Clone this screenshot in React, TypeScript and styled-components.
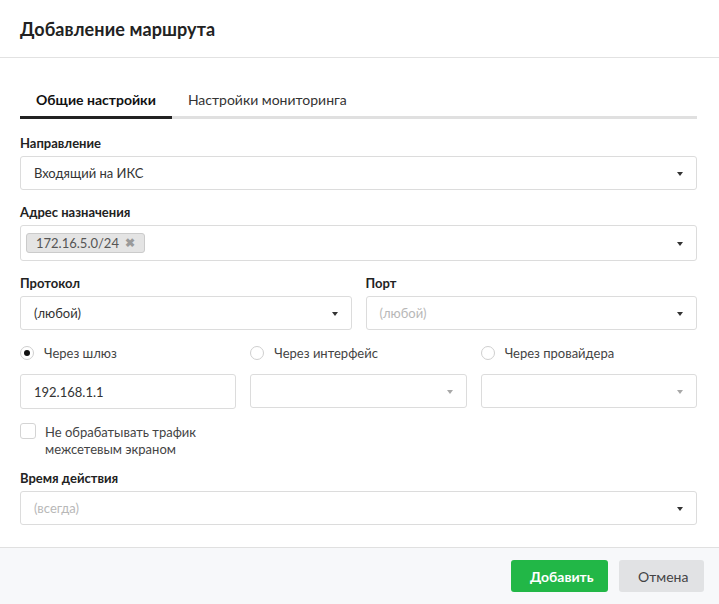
import React from "react"
import styled, { createGlobalStyle, css } from "styled-components"

const GlobalStyle = createGlobalStyle`
  html, body {
    margin: 0;
    padding: 0;
    background: #fff;
  }
  body {
    font-family: Lato, "Open Sans", "Liberation Sans", sans-serif;
    color: #333;
    -webkit-font-smoothing: antialiased;
  }
`

const Dialog = styled.div`
  width: 719px;
  height: 604px;
  display: flex;
  flex-direction: column;
  background: #fff;
`

const Header = styled.div`
  height: 58px;
  display: flex;
  align-items: center;
  padding: 0 20px;
  border-bottom: 1px solid #e2e2e2;
  box-sizing: border-box;
  flex-shrink: 0;
`

const Title = styled.h2`
  margin: 0;
  font-size: 18px;
  font-weight: 700;
  color: #222;
  letter-spacing: 0.1px;
`

const Body = styled.div`
  flex: 1;
  padding: 28px 22px 0 20px;
`

const Tabs = styled.div`
  display: flex;
  border-bottom: 3px solid #e0e0e0;
  margin-bottom: 17px;
`

const Tab = styled.div<{ $active?: boolean }>`
  padding: 5px 16px 7px;
  font-size: 14px;
  line-height: 18px;
  margin-bottom: -3px;
  border-bottom: 3px solid transparent;
  color: #333;
  cursor: pointer;
  ${(p) =>
    p.$active &&
    css`
      font-weight: 700;
      color: #111;
      border-bottom-color: #222;
    `}
`

const Field = styled.div<{ $gap?: number }>`
  margin-bottom: ${(p) => p.$gap ?? 15}px;
`

const Label = styled.div`
  font-size: 13px;
  font-weight: 700;
  line-height: 15px;
  color: #222;
  margin-bottom: 5px;
`

const Box = styled.div<{ $tall?: boolean }>`
  height: ${(p) => (p.$tall ? 36 : 34)}px;
  box-sizing: border-box;
  border: 1px solid #dcdcdc;
  border-radius: 3px;
  background: #fff;
  display: flex;
  align-items: center;
  padding: 0 13px 0 13px;
  font-size: 13px;
  color: #333;
`

const Value = styled.span<{ $placeholder?: boolean }>`
  flex: 1;
  color: ${(p) => (p.$placeholder ? "#b8b8b8" : "#333")};
`

const Caret = styled.span<{ $muted?: boolean }>`
  width: 0;
  height: 0;
  border-left: 3.5px solid transparent;
  border-right: 3.5px solid transparent;
  border-top: 4px solid ${(p) => (p.$muted ? "#a8a8a8" : "#333")};
  margin-top: 1px;
`

const TagList = styled.div`
  flex: 1;
  display: flex;
  gap: 4px;
  margin-left: -8px;
`

const Tag = styled.span`
  display: inline-flex;
  align-items: center;
  gap: 6px;
  height: 20px;
  box-sizing: border-box;
  padding: 0 9px 0 9px;
  background: #e4e4e4;
  border: 1px solid #cbcbcb;
  border-radius: 3px;
  font-size: 13px;
  color: #555;
`

const TagRemove = styled.span`
  color: #9a9a9a;
  font-size: 12px;
  font-weight: 700;
  line-height: 1;
`

const Columns = styled.div<{ $cols: number }>`
  display: grid;
  grid-template-columns: repeat(${(p) => p.$cols}, 1fr);
  column-gap: 14px;
`

const RadioRow = styled.label`
  display: flex;
  align-items: center;
  gap: 10px;
  height: 16px;
  font-size: 13px;
  color: #444;
  margin-bottom: 13px;
`

const RadioCircle = styled.span<{ $checked?: boolean }>`
  width: 14px;
  height: 14px;
  box-sizing: border-box;
  border-radius: 50%;
  border: 1px solid #cfcfcf;
  background: #fff;
  display: flex;
  align-items: center;
  justify-content: center;
  &::after {
    content: "";
    width: 6px;
    height: 6px;
    border-radius: 50%;
    background: ${(p) => (p.$checked ? "#111" : "transparent")};
  }
`

const Input = styled.div`
  height: 35px;
  box-sizing: border-box;
  border: 1px solid #dcdcdc;
  border-radius: 3px;
  display: flex;
  align-items: center;
  padding: 0 13px;
  font-size: 13px;
  color: #333;
`

const CheckRow = styled.label`
  display: flex;
  align-items: flex-start;
  gap: 9px;
  margin-top: 14px;
  margin-bottom: 13px;
  font-size: 13px;
  line-height: 17px;
  color: #444;
`

const CheckBox = styled.span`
  width: 16px;
  height: 16px;
  flex-shrink: 0;
  box-sizing: border-box;
  border: 1px solid #d4d4d4;
  border-radius: 3px;
  background: #fff;
`

const CheckText = styled.span`
  margin-top: 1px;
`

const Footer = styled.div`
  height: 57px;
  box-sizing: border-box;
  border-top: 1px solid #e0e0e0;
  background: #f7f8fa;
  display: flex;
  align-items: center;
  justify-content: flex-end;
  gap: 11px;
  padding: 0 15px 0 0;
  flex-shrink: 0;
`

const Button = styled.button<{ $primary?: boolean }>`
  height: 32px;
  border: none;
  border-radius: 3px;
  font-family: inherit;
  font-size: 14px;
  padding: 0 19px;
  cursor: pointer;
  ${(p) =>
    p.$primary
      ? css`
          background: #22b747;
          color: #fff;
          font-weight: 700;
          width: 97px;
        `
      : css`
          background: #e1e2e4;
          color: #444;
          width: 85px;
        `}
`

const Select: React.FC<{ value?: string; placeholder?: boolean; muted?: boolean }> = ({
  value,
  placeholder,
  muted,
}) => (
  <Box>
    <Value $placeholder={placeholder}>{value}</Value>
    <Caret $muted={muted} />
  </Box>
)

const App: React.FC = () => {
  return (
    <>
      <GlobalStyle />
      <Dialog>
        <Header>
          <Title>Добавление маршрута</Title>
        </Header>
        <Body>
          <Tabs>
            <Tab $active>Общие настройки</Tab>
            <Tab>Настройки мониторинга</Tab>
          </Tabs>

          <Field>
            <Label>Направление</Label>
            <Select value="Входящий на ИКС" />
          </Field>

          <Field>
            <Label>Адрес назначения</Label>
            <Box $tall>
              <TagList>
                <Tag>
                  172.16.5.0/24 <TagRemove>✖</TagRemove>
                </Tag>
              </TagList>
              <Caret />
            </Box>
          </Field>

          <Columns $cols={2}>
            <Field>
              <Label>Протокол</Label>
              <Select value="(любой)" />
            </Field>
            <Field>
              <Label>Порт</Label>
              <Select value="(любой)" placeholder />
            </Field>
          </Columns>

          <Columns $cols={3}>
            <div>
              <RadioRow>
                <RadioCircle $checked />
                Через шлюз
              </RadioRow>
              <Input>192.168.1.1</Input>
            </div>
            <div>
              <RadioRow>
                <RadioCircle />
                Через интерфейс
              </RadioRow>
              <Select muted />
            </div>
            <div>
              <RadioRow>
                <RadioCircle />
                Через провайдера
              </RadioRow>
              <Select muted />
            </div>
          </Columns>

          <CheckRow>
            <CheckBox />
            <CheckText>
              Не обрабатывать трафик
              <br />
              межсетевым экраном
            </CheckText>
          </CheckRow>

          <Field $gap={0}>
            <Label>Время действия</Label>
            <Select value="(всегда)" placeholder />
          </Field>
        </Body>
        <Footer>
          <Button $primary>Добавить</Button>
          <Button>Отмена</Button>
        </Footer>
      </Dialog>
    </>
  )
}

export default App
